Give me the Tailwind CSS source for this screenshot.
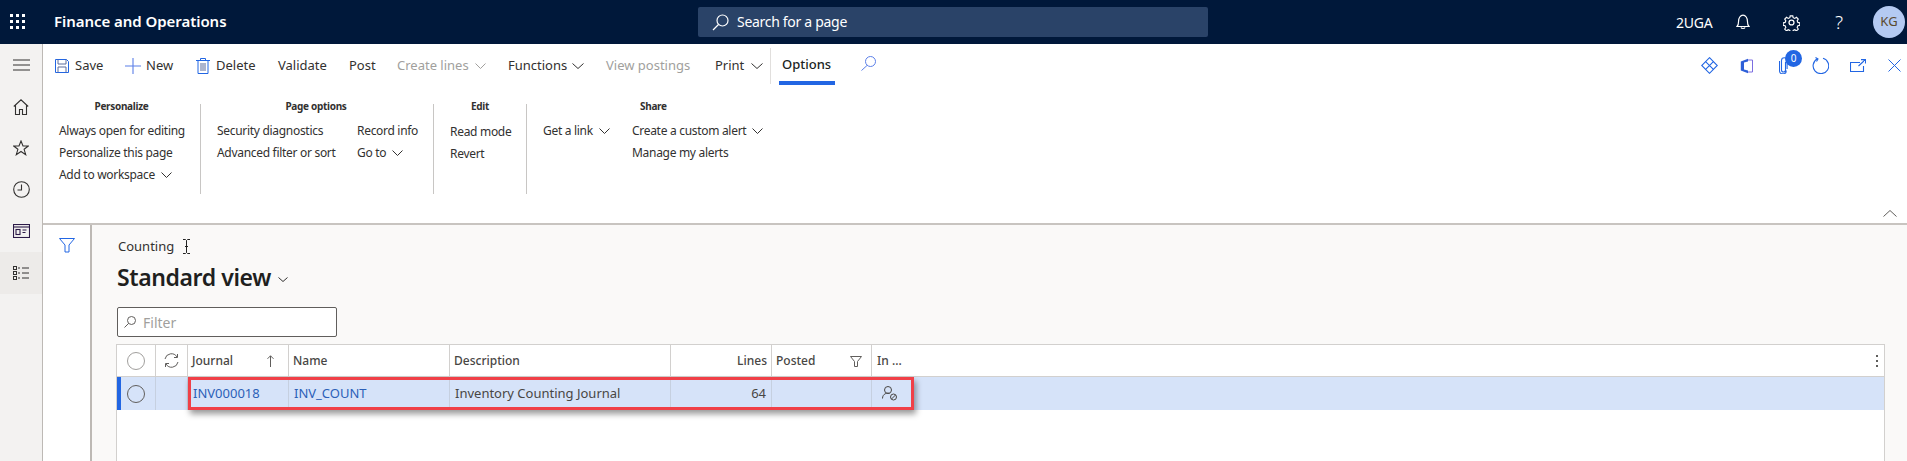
<!doctype html>
<html>
<head>
<meta charset="utf-8">
<script src="https://cdn.jsdelivr.net/npm/@tailwindcss/browser@4"></script>
</head>
<body class="m-0 w-[1907px] h-[461px] overflow-hidden bg-white font-['Noto_Sans','Open_Sans',sans-serif] text-[13px] text-[#323130]">
<!-- top bar -->
<header class="h-[44px] bg-[#00183a] flex items-center text-white">
  <div class="w-[54px] pl-[10px] flex items-center">
    <svg width="16" height="16" viewBox="0 0 16 16" fill="#fff"><rect x="0" y="0" width="3" height="3"/><rect x="6" y="0" width="3" height="3"/><rect x="12" y="0" width="3" height="3"/><rect x="0" y="6" width="3" height="3"/><rect x="6" y="6" width="3" height="3"/><rect x="12" y="6" width="3" height="3"/><rect x="0" y="12" width="3" height="3"/><rect x="6" y="12" width="3" height="3"/><rect x="12" y="12" width="3" height="3"/></svg>
  </div>
  <div class="w-[644px] -mt-[2px] text-[15px] font-semibold tracking-[-0.05px]">Finance and Operations</div>
  <div class="w-[510px] h-[30px] bg-[#2a4368] rounded-[2px] flex items-center pl-[14px] gap-[8px] text-[14px] tracking-[-0.3px]">
    <svg width="17" height="17" viewBox="0 0 17 17" fill="none" stroke="#fff" stroke-width="1.2"><circle cx="10.500" cy="6.500" r="5.500"/><path d="M6.500 10.500 1 16"/></svg>
    <span class="-mt-[2px]">Search for a page</span>
  </div>
  <div class="w-[468px] flex-none"></div>
  <div class="w-[60px] text-[14px] tracking-[-0.2px] flex-none">2UGA</div>
  <div class="w-[47px] flex-none">
    <svg width="14" height="16" viewBox="0 0 14 16" fill="none" stroke="#fff" stroke-width="1.2"><path d="M1 12.500h12c-1.500-1.500-1.600-3-1.600-5.500 0-3-1.700-5.800-4.400-5.800S2.600 4 2.600 7c0 2.500-.1 4-1.600 5.500Z"/><path d="M5 13.500c.4 1.300 3.600 1.300 4 0"/></svg>
  </div>
  <div class="w-[52px] flex-none">
    <svg width="17" height="17" viewBox="0 0 24 24" fill="none" stroke="#fff" stroke-width="1.800"><circle cx="12" cy="12" r="3.500"/><path d="M10 1.500h4l.6 3 2.500 1.100 2.700-1.700 2.800 2.800-1.700 2.700 1.100 2.500 3 .6v4l-3 .6-1.100 2.500 1.700 2.700-2.800 2.800-2.700-1.700-2.500 1.100-.6 3h-4l-.6-3-2.500-1.100-2.700 1.700-2.800-2.800 1.700-2.700-1.100-2.500-3-.6v-4l3-.6 1.100-2.500-1.700-2.700 2.800-2.800 2.700 1.700 2.500-1.100Z" transform="translate(1.200 1.200) scale(.9)"/></svg>
  </div>
  <div class="w-[38px] flex-none text-[19px] leading-none font-light">?</div>
  <div class="w-[32px] h-[32px] rounded-full bg-[#b4caf2] flex-none flex items-center justify-center text-[#5b4a2e] text-[13px]">KG</div>
</header>
<div class="flex h-[417px]">
  <!-- rail -->
  <nav class="w-[43px] flex-none bg-[#f3f2f1] border-r border-[#bdb9b5] flex flex-col items-center">
    <div class="h-[42px] w-full flex items-center justify-center"><svg width="17" height="12" viewBox="0 0 17 12" stroke="#323130" stroke-width="1.200"><path d="M0 1h17M0 6h17M0 11h17"/></svg></div>
    <div class="h-[41px] w-full flex items-center justify-center"><svg width="16" height="16" viewBox="0 0 16 16" fill="none" stroke="#323130" stroke-width="1.100"><path d="M.8 7.500 8 .8l7.200 6.700M2.500 6.500v9h4v-5h3v5h4v-9"/></svg></div>
    <div class="h-[41px] w-full flex items-center justify-center"><svg width="16" height="16" viewBox="0 0 16 16" fill="none" stroke="#323130" stroke-width="1.100"><path d="m8 1 2 5h5.300l-4.200 3.300 1.600 5.400L8 11.500l-4.700 3.200 1.600-5.400L.7 6H6Z"/></svg></div>
    <div class="h-[42px] w-full flex items-center justify-center"><svg width="17" height="17" viewBox="0 0 17 17" fill="none" stroke="#323130" stroke-width="1.100"><circle cx="8.500" cy="8.500" r="7.800"/><path d="M8.500 3.500v5.500h-4"/></svg></div>
    <div class="h-[42px] w-full flex items-center justify-center"><svg width="17" height="14" viewBox="0 0 17 14" fill="none" stroke="#2b1a48" stroke-width="1.100"><rect x=".5" y=".5" width="16" height="13"/><path d="M.5 3h16"/><rect x="3" y="5.500" width="4" height="5"/><path d="M9.500 6h4M9.500 8.500h3"/></svg></div>
    <div class="h-[42px] w-full bg-[#edebe9] flex items-center justify-center"><svg width="16" height="14" viewBox="0 0 16 14" fill="none" stroke="#323130" stroke-width="1"><rect x=".5" y=".5" width="3" height="3"/><rect x=".5" y="5.500" width="3" height="3"/><rect x=".5" y="10.500" width="3" height="3"/><path d="M5 2h2M5 7h2M5 12h2M9 2h7M9 7h7M9 12h7"/></svg></div>
  </nav>
  <div class="flex-1 min-w-0 flex flex-col">
    <!-- ribbon -->
    <section class="h-[181px] flex-none border-b-2 border-[#c8c4c0] relative">
      <div class="h-[42px] pt-[1px] flex items-center pl-[12px]">
        <div class="w-[70px] flex items-center gap-[6px] flex-none"><svg width="14" height="14" viewBox="0 0 14 14" fill="none" stroke="#2266e3" stroke-width="1"><path d="M.5.500h11l2 2v11H.5Z"/><path d="M3 .500V5h8V.500M3 13.500V8h8v5.500" stroke="#5c6c9c"/></svg><span>Save</span></div>
        <div class="w-[71px] flex items-center gap-[5px] flex-none"><svg width="16" height="16" viewBox="0 0 16 16" stroke="#5b7fe8" stroke-width="1.100"><path d="M8 0v16M0 8h16"/></svg><span>New</span></div>
        <div class="w-[82px] flex items-center gap-[6px] flex-none"><svg width="14" height="16" viewBox="0 0 14 16" fill="none" stroke="#2266e3" stroke-width="1"><path d="M0 2.500h14M4.500 2.500V.500h5v2M2 2.500v13h10v-13" /><path d="M5 5v8M7 5v8M9 5v8" stroke="#5c6c9c"/></svg><span>Delete</span></div>
        <div class="w-[71px] flex-none">Validate</div>
        <div class="w-[48px] flex-none">Post</div>
        <div class="w-[111px] flex-none flex items-center gap-[6px] text-[#a19f9d]"><span>Create lines</span><svg width="11" height="6" viewBox="0 0 11 6" fill="none" stroke="#a19f9d"><path d="m.5.500 5 5 5-5"/></svg></div>
        <div class="w-[98px] flex-none flex items-center gap-[5px]"><span>Functions</span><svg width="12" height="6" viewBox="0 0 12 6" fill="none" stroke="#323130"><path d="m.5.500 5.500 5 5.500-5"/></svg></div>
        <div class="w-[109px] flex-none text-[#a19f9d]">View postings</div>
        <div class="w-[55px] flex-none flex items-center gap-[7px]"><span>Print</span><svg width="12" height="6" viewBox="0 0 12 6" fill="none" stroke="#323130"><path d="m.5.500 5.500 5 5.500-5"/></svg></div>
        <div class="w-[91px] flex-none h-[36px] mt-[1px] border-l border-[#e1dfdd] pl-[8px]">
          <div class="w-[56px] h-[37px] border-b-[4px] border-[#2266e3] pl-[3px] pt-[7px] font-medium text-[#201f1e]">Options</div>
        </div>
        <div class="flex-none -mt-[4px]"><svg width="15" height="15" viewBox="0 0 15 15" fill="none" stroke="#5b7fe8" stroke-width="1"><circle cx="9.500" cy="5.500" r="5"/><path d="M6 9.500.5 14.500"/></svg></div>
        <div class="ml-auto flex items-center flex-none -mr-[6px]">
          <div class="w-[37px] flex justify-center"><svg width="17" height="17" viewBox="0 0 17 17" fill="none" stroke="#2266e3" stroke-width="1.100"><path d="M8.500.700 16.300 8.500 8.500 16.300.7 8.500Z"/><path d="M4.600 4.600 12.400 12.400M12.400 4.600 4.600 12.400" /></svg></div>
          <div class="w-[37px] flex justify-center"><svg width="13" height="16" viewBox="0 0 13 16" fill="none"><path d="M.8 3.500 8 .8v14.400L.8 12.500Z" fill="#2d5fd8"/><path d="M4 4.500v7l4 1V3.500Z" fill="#fff"/><path d="M8 2h4.500v12H8" stroke="#7c6ee0"/></svg></div>
          <div class="w-[37px] flex justify-center relative"><svg width="9" height="17" viewBox="0 0 9 17" fill="none" stroke="#2266e3" stroke-width="1.100"><path d="M6.500 5v8a2 2 0 0 1-4 0V3.500a2.800 2.800 0 0 1 5.600 0V12M.5 4v9.500a3.400 3.400 0 0 0 6.800 0"/></svg><span class="absolute left-[20px] -top-[7px] w-[17px] h-[17px] rounded-full bg-[#2266e3] text-white text-[10px] leading-[17px] text-center">0</span></div>
          <div class="w-[37px] flex justify-center"><svg width="17" height="17" viewBox="0 0 17 17" fill="none" stroke="#2266e3" stroke-width="1.100"><path d="M5.500 1.800A7.800 7.800 0 1 0 11 1.300"/><path d="M3.500.6 6 2 4.500 4.500"/></svg></div>
          <div class="w-[37px] flex justify-center"><svg width="16" height="13" viewBox="0 0 16 13" fill="none" stroke="#2266e3" stroke-width="1.100"><path d="M10 3.500H.5v9h13V7"/><path d="M8.500 7 15 1M11 .6h4.500v4"/></svg></div>
          <div class="w-[37px] flex justify-center"><svg width="13" height="13" viewBox="0 0 13 13" stroke="#2266e3" stroke-width="1"><path d="m.5.500 12 12M12.500.500l-12 12"/></svg></div>
        </div>
      </div>
      <div class="flex h-[90px] mt-[18px] text-[12px] leading-[22px] tracking-[-0.3px]">
        <div class="w-[157px] flex-none pl-[16px]">
          <div class="-mt-[7px] h-[18px] leading-[18px] text-[10px] font-bold text-center w-[125px]">Personalize</div>
          <div class="mt-[5px] flex flex-col">
            <span>Always open for editing</span><span>Personalize this page</span>
            <span class="flex items-center gap-[6px]">Add to workspace <svg width="11" height="6" viewBox="0 0 11 6" fill="none" stroke="#323130"><path d="m.5.500 5 5 5-5"/></svg></span>
          </div>
        </div>
        <div class="w-[233px] flex-none border-l border-[#c8c6c4] pl-[16px]">
          <div class="-mt-[7px] h-[18px] leading-[18px] text-[10px] font-bold text-center w-[198px]">Page options</div>
          <div class="mt-[5px] grid grid-cols-[140px_1fr]">
            <span>Security diagnostics</span><span>Record info</span>
            <span>Advanced filter or sort</span>
            <span class="flex items-center gap-[6px]">Go to <svg width="11" height="6" viewBox="0 0 11 6" fill="none" stroke="#323130"><path d="m.5.500 5 5 5-5"/></svg></span>
          </div>
        </div>
        <div class="w-[93px] flex-none border-l border-[#c8c6c4] pl-[16px]">
          <div class="-mt-[7px] h-[18px] leading-[18px] text-[10px] font-bold text-center w-[60px]">Edit</div>
          <div class="mt-[6px] flex flex-col"><span>Read mode</span><span>Revert</span></div>
        </div>
        <div class="flex-none border-l border-[#c8c6c4] pl-[16px] w-[300px]">
          <div class="-mt-[7px] h-[18px] leading-[18px] text-[10px] font-bold pl-[97px]">Share</div>
          <div class="mt-[5px] grid grid-cols-[89px_1fr]">
            <span class="flex items-center gap-[6px]">Get a link <svg width="11" height="6" viewBox="0 0 11 6" fill="none" stroke="#323130"><path d="m.5.500 5 5 5-5"/></svg></span>
            <span class="flex items-center gap-[6px]">Create a custom alert <svg width="11" height="6" viewBox="0 0 11 6" fill="none" stroke="#323130"><path d="m.5.500 5 5 5-5"/></svg></span>
            <span></span><span>Manage my alerts</span>
          </div>
        </div>
      </div>
      <svg class="absolute right-[10px] bottom-[6px]" width="14" height="7" viewBox="0 0 14 7" fill="none" stroke="#605e5c"><path d="m.5 6.500 6.500-6 6.500 6"/></svg>
    </section>
    <div class="flex-1 min-h-0 flex">
      <!-- filter pane -->
      <aside class="w-[49px] flex-none border-r-2 border-[#bdb9b5] bg-white flex justify-center pt-[13px]">
        <svg class="h-[15px]" width="16" height="15" viewBox="0 0 16 15" fill="none" stroke="#2266e3" stroke-width="1"><path d="M.5.500h15L10 7v7H6V7Z"/></svg>
      </aside>
      <!-- content -->
      <main class="flex-1 min-w-0 bg-[#faf9f8] pl-[24px] pr-[22px] relative overflow-hidden">
        <div class="pt-[4px] h-[38px] leading-[18px] pl-[2px] text-[13px] flex items-center gap-[9px]"><span>Counting</span>
          <svg width="7" height="15" viewBox="0 0 7 15" fill="none" stroke="#222" stroke-width="1"><path d="M0 .500h2.500L3.500 1.500 4.500.500H7M3.500 1.500v12M0 14.500h2.500l1-1 1 1H7M2 7.500h3"/></svg>
        </div>
        <div class="-mt-[2px] h-[32px] flex items-center pl-[1px] text-[23px] font-semibold tracking-[-0.4px] text-[#201f1e] gap-[7px]"><span>Standard view</span>
          <svg class="mt-[5px]" width="10" height="5" viewBox="0 0 10 5" fill="none" stroke="#323130"><path d="m.5.500 4.500 4 4.500-4"/></svg>
        </div>
        <div class="mt-[14px] ml-[1px] w-[220px] h-[30px] border border-[#605e5c] rounded-[2px] bg-white flex items-center pl-[6px] gap-[7px] text-[14px] text-[#a19f9d]">
          <svg width="12" height="12" viewBox="0 0 12 12" fill="none" stroke="#605e5c" stroke-width="1"><circle cx="7.500" cy="4.500" r="4"/><path d="M4.700 7.300.5 11.500"/></svg><span>Filter</span>
        </div>
        <!-- grid -->
        <div class="mt-[7px] h-[117px] border-l border-r border-t border-[#d2d0ce] bg-white relative">
          <div class="flex h-[32px] pb-0 border-b border-[#d2d0ce] text-[12px] font-medium text-[#484644]">
            <div class="w-[39px] flex-none border-r border-[#d2d0ce] flex items-center justify-center"><span class="w-[18px] h-[18px] rounded-full border border-[#a19f9d] block"></span></div>
            <div class="w-[32px] flex-none border-r border-[#d2d0ce] flex items-center justify-center">
              <svg width="15" height="15" viewBox="0 0 15 15" fill="none" stroke="#605e5c" stroke-width="1"><path d="M1 6a6.500 6.500 0 0 1 12-2M14 9a6.500 6.500 0 0 1-12 2"/><path d="M13.500 1v3.500H10M1.500 14v-3.500H5"/></svg>
            </div>
            <div class="w-[101px] flex-none border-r border-[#d2d0ce] pl-[4px] pr-[14px] pt-[1px] flex items-center justify-between"><span>Journal</span><svg width="7" height="12" viewBox="0 0 7 12" fill="none" stroke="#605e5c"><path d="M3.500 12V.800M.5 3.800l3-3 3 3"/></svg></div>
            <div class="w-[161px] flex-none border-r border-[#d2d0ce] pl-[4px] pt-[1px] flex items-center">Name</div>
            <div class="w-[221px] flex-none border-r border-[#d2d0ce] pl-[4px] pt-[1px] flex items-center">Description</div>
            <div class="w-[101px] flex-none border-r border-[#d2d0ce] pr-[4px] pt-[1px] flex items-center justify-end">Lines</div>
            <div class="w-[100px] flex-none border-r border-[#d2d0ce] pl-[4px] pr-[9px] pt-[1px] flex items-center justify-between"><span>Posted</span><svg width="12" height="11" viewBox="0 0 12 11" fill="none" stroke="#605e5c"><path d="M.5.500h11L7.500 5.500v5h-3v-5Z"/></svg></div>
            <div class="flex-1 pl-[5px] pr-[5px] pt-[1px] flex items-center justify-between"><span>In ...</span>
              <svg width="3" height="13" viewBox="0 0 3 13" fill="#605e5c"><rect width="2" height="2"/><rect y="5" width="2" height="2"/><rect y="10" width="2" height="2"/></svg>
            </div>
          </div>
          <div class="flex h-[33px] bg-[#d6e3f9] border-l-[4px] border-[#2266e3] text-[13px] text-[#484644]">
            <div class="w-[35px] flex-none border-r border-[#c6d0e0] flex items-center justify-center"><span class="w-[18px] h-[18px] rounded-full border border-[#605e5c] block -ml-[4px]"></span></div>
            <div class="w-[32px] flex-none border-r border-[#c6d0e0]"></div>
            <div class="w-[101px] flex-none border-r border-[#c6d0e0] pl-[5px] flex items-center text-[#2b5fb8]">INV000018</div>
            <div class="w-[161px] flex-none border-r border-[#c6d0e0] pl-[5px] flex items-center text-[#2b5fb8]">INV_COUNT</div>
            <div class="w-[221px] flex-none border-r border-[#c6d0e0] pl-[5px] flex items-center">Inventory Counting Journal</div>
            <div class="w-[101px] flex-none border-r border-[#c6d0e0] pr-[5px] flex items-center justify-end">64</div>
            <div class="w-[100px] flex-none border-r border-[#c6d0e0]"></div>
            <div class="flex-1 pl-[10px] flex items-center">
              <svg width="15" height="15" viewBox="0 0 15 15" fill="none" stroke="#484644" stroke-width="1"><circle cx="6" cy="4" r="3.500"/><path d="M.5 12.500c0-5 5-6 7-5"/><circle cx="11.500" cy="11" r="3"/><path d="m9.500 13 4-4"/></svg>
            </div>
          </div>
          <!-- highlight annotation -->
          <div class="absolute left-[71px] top-[32px] w-[726px] h-[33px] border-[3px] border-[#f04048] shadow-[2px_4px_6px_rgba(0,0,0,0.4)]"></div>
        </div>
      </main>
    </div>
  </div>
</div>
</body>
</html>
